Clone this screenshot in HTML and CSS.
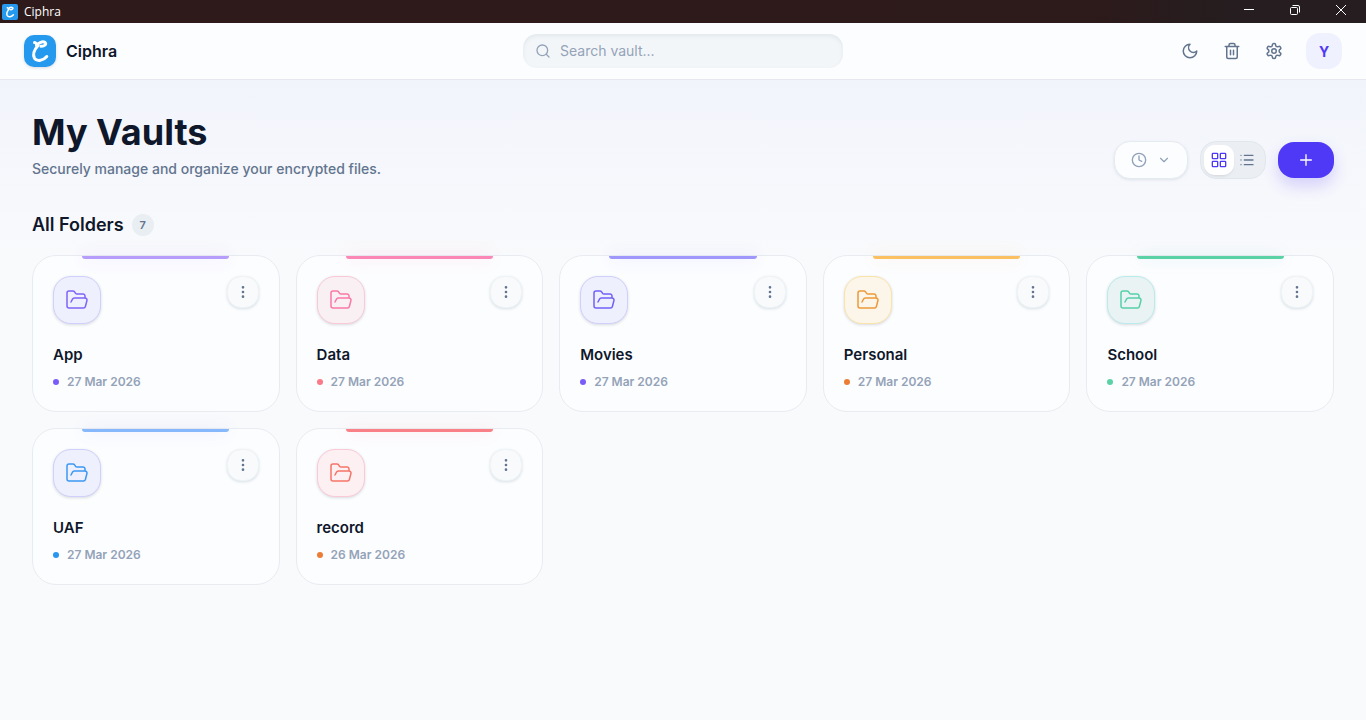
FILE: index.html
```
<!doctype html>
<html lang="en">
<head>
<title>Ciphra</title>
<meta charset="utf-8" />
<meta name="viewport" content="width=device-width, initial-scale=1" />
<link rel="stylesheet" href="styles.css">
</head>

<body>
<!-- icon sprite -->
<svg class="sprite" aria-hidden="true">
<symbol id="i-mark" viewBox="0 0 32 32">
<path d="M10.500 7.500C12 7.500 12.800 9 12.500 10.500M12.500 10.500C14.500 7.500 18.500 6 21 7.300C23 9 20.500 11.500 17 11.300M14 10.500C10.500 14.500 8.500 19.500 10.500 23.300C13 27 19.500 25.500 22.800 21.500"/>
</symbol>
<symbol id="i-search" viewBox="0 0 24 24"><circle cx="11" cy="11" r="8"/><path d="m21 21-4.300-4.300"/></symbol>
<symbol id="i-moon" viewBox="0 0 24 24"><path d="M12 3a6 6 0 0 0 9 9 9 9 0 1 1-9-9Z"/></symbol>
<symbol id="i-trash" viewBox="0 0 24 24"><path d="M3 6h18M19 6v14a2 2 0 0 1-2 2H7a2 2 0 0 1-2-2V6M8 6V4a2 2 0 0 1 2-2h4a2 2 0 0 1 2 2v2M10 11v6M14 11v6"/></symbol>
<symbol id="i-gear" viewBox="0 0 24 24"><path d="M12.220 2h-.440a2 2 0 0 0-2 2v.180a2 2 0 0 1-1 1.730l-.430.250a2 2 0 0 1-2 0l-.150-.080a2 2 0 0 0-2.730.730l-.220.380a2 2 0 0 0 .730 2.730l.150.100a2 2 0 0 1 1 1.720v.510a2 2 0 0 1-1 1.740l-.150.090a2 2 0 0 0-.730 2.730l.220.380a2 2 0 0 0 2.730.730l.150-.080a2 2 0 0 1 2 0l.430.250a2 2 0 0 1 1 1.730V20a2 2 0 0 0 2 2h.440a2 2 0 0 0 2-2v-.180a2 2 0 0 1 1-1.730l.430-.250a2 2 0 0 1 2 0l.150.080a2 2 0 0 0 2.730-.730l.220-.390a2 2 0 0 0-.730-2.730l-.150-.080a2 2 0 0 1-1-1.740v-.500a2 2 0 0 1 1-1.740l.150-.090a2 2 0 0 0 .730-2.730l-.220-.380a2 2 0 0 0-2.730-.730l-.150.080a2 2 0 0 1-2 0l-.430-.250a2 2 0 0 1-1-1.730V4a2 2 0 0 0-2-2z"/><circle cx="12" cy="12" r="3"/></symbol>
<symbol id="i-clock" viewBox="0 0 24 24"><circle cx="12" cy="12" r="10"/><path d="M12 6v6l4 2"/></symbol>
<symbol id="i-chevron" viewBox="0 0 24 24"><path d="m6 9 6 6 6-6"/></symbol>
<symbol id="i-grid" viewBox="0 0 24 24"><rect x="2" y="2" width="8" height="8" rx="1"/><rect x="14" y="2" width="8" height="8" rx="1"/><rect x="14" y="14" width="8" height="8" rx="1"/><rect x="2" y="14" width="8" height="8" rx="1"/></symbol>
<symbol id="i-list" viewBox="0 0 24 24"><path d="M3 5h.010M3 12h.010M3 19h.010M8 5h13M8 12h13M8 19h13"/></symbol>
<symbol id="i-plus" viewBox="0 0 24 24"><path d="M4 12h16M12 4v16"/></symbol>
<symbol id="i-more" viewBox="0 0 24 24"><circle cx="12" cy="12" r="1"/><circle cx="12" cy="5" r="1"/><circle cx="12" cy="19" r="1"/></symbol>
<symbol id="i-folder" viewBox="0 0 24 24"><path d="m6 14 1.500-2.900A2 2 0 0 1 9.240 10H20a2 2 0 0 1 1.940 2.500l-1.540 6a2 2 0 0 1-1.950 1.500H4a2 2 0 0 1-2-2V5a2 2 0 0 1 2-2h3.900a2 2 0 0 1 1.690.900l.810 1.200a2 2 0 0 0 1.670.900H18a2 2 0 0 1 2 2v2"/></symbol>
</svg>

<div class="titlebar">
<svg class="titlebar-logo mark"><use href="#i-mark"/></svg>
<span class="titlebar-name">Ciphra</span>
<div class="window-controls">
<button type="button" aria-label="Minimize"><svg viewBox="0 0 10 10"><path d="M0 4.500h10"/></svg></button>
<button type="button" aria-label="Restore"><svg viewBox="0 0 10 10"><rect x="0.500" y="2.500" width="7" height="7" rx="1"/><path d="M2.500 .5H8a1.500 1.500 0 0 1 1.500 1.500v5.500"/></svg></button>
<button type="button" aria-label="Close"><svg viewBox="0 0 10 10"><path d="M0 0l10 10M10 0L0 10"/></svg></button>
</div>
</div>

<header class="topbar">
<a class="brand" href="#">
<svg class="brand-logo mark"><use href="#i-mark"/></svg>
<span>Ciphra</span>
</a>
<label class="search">
<svg class="icon icon-sm"><use href="#i-search"/></svg>
<input type="text" placeholder="Search vault..." aria-label="Search vault" />
</label>
<div class="actions">
<div class="action-icons">
<button class="icon-btn" type="button" aria-label="Dark mode"><svg class="icon icon-md"><use href="#i-moon"/></svg></button>
<button class="icon-btn" type="button" aria-label="Trash"><svg class="icon icon-md"><use href="#i-trash"/></svg></button>
<button class="icon-btn" type="button" aria-label="Settings"><svg class="icon icon-md"><use href="#i-gear"/></svg></button>
</div>
<button class="avatar" type="button">Y</button>
</div>
</header>

<main>
<div class="page-head">
<div>
<h1>My Vaults</h1>
<p class="subtitle">Securely manage and organize your encrypted files.</p>
</div>
<div class="toolbar">
<button class="sort" type="button" aria-label="Sort by date">
<svg class="icon icon-sm"><use href="#i-clock"/></svg>
<svg class="icon icon-xs"><use href="#i-chevron"/></svg>
</button>
<div class="view-toggle">
<button class="active" type="button" aria-label="Grid view"><svg class="icon icon-sm"><use href="#i-grid"/></svg></button>
<button type="button" aria-label="List view"><svg class="icon icon-sm"><use href="#i-list"/></svg></button>
</div>
<button class="add" type="button" aria-label="New folder"><svg class="icon icon-sm"><use href="#i-plus"/></svg></button>
</div>
</div>

<div class="section-head">
<h2>All Folders</h2>
<span class="count">7</span>
</div>

<div class="folders">
<article class="card violet">
<div class="card-top">
<div class="tile"><svg class="icon icon-lg"><use href="#i-folder"/></svg></div>
<button class="more" type="button" aria-label="App options"><svg class="icon icon-sm"><use href="#i-more"/></svg></button>
</div>
<h3>App</h3>
<p class="date">27 Mar 2026</p>
</article>

<article class="card pink">
<div class="card-top">
<div class="tile"><svg class="icon icon-lg"><use href="#i-folder"/></svg></div>
<button class="more" type="button" aria-label="Data options"><svg class="icon icon-sm"><use href="#i-more"/></svg></button>
</div>
<h3>Data</h3>
<p class="date">27 Mar 2026</p>
</article>

<article class="card indigo">
<div class="card-top">
<div class="tile"><svg class="icon icon-lg"><use href="#i-folder"/></svg></div>
<button class="more" type="button" aria-label="Movies options"><svg class="icon icon-sm"><use href="#i-more"/></svg></button>
</div>
<h3>Movies</h3>
<p class="date">27 Mar 2026</p>
</article>

<article class="card amber">
<div class="card-top">
<div class="tile"><svg class="icon icon-lg"><use href="#i-folder"/></svg></div>
<button class="more" type="button" aria-label="Personal options"><svg class="icon icon-sm"><use href="#i-more"/></svg></button>
</div>
<h3>Personal</h3>
<p class="date">27 Mar 2026</p>
</article>

<article class="card green">
<div class="card-top">
<div class="tile"><svg class="icon icon-lg"><use href="#i-folder"/></svg></div>
<button class="more" type="button" aria-label="School options"><svg class="icon icon-sm"><use href="#i-more"/></svg></button>
</div>
<h3>School</h3>
<p class="date">27 Mar 2026</p>
</article>

<article class="card blue">
<div class="card-top">
<div class="tile"><svg class="icon icon-lg"><use href="#i-folder"/></svg></div>
<button class="more" type="button" aria-label="UAF options"><svg class="icon icon-sm"><use href="#i-more"/></svg></button>
</div>
<h3>UAF</h3>
<p class="date">27 Mar 2026</p>
</article>

<article class="card red">
<div class="card-top">
<div class="tile"><svg class="icon icon-lg"><use href="#i-folder"/></svg></div>
<button class="more" type="button" aria-label="record options"><svg class="icon icon-sm"><use href="#i-more"/></svg></button>
</div>
<h3>record</h3>
<p class="date">26 Mar 2026</p>
</article>
</div>
</main>
</body>
</html>
```

FILE: styles.css
```
* {
box-sizing: border-box;
}

body {
margin: 0;
min-height: 100vh;
display: flex;
flex-direction: column;
background-color: #f9fafc;
color: #0f172b;
font-family: Inter, "Liberation Sans", sans-serif;
}

h1, h2, h3, p {
margin: 0;
}

button {
display: flex;
align-items: center;
justify-content: center;
padding: 0;
border: 0;
background: none;
color: inherit;
font-family: inherit;
cursor: pointer;
}

.sprite {
display: none;
}

/* icons */
.icon {
flex: none;
fill: none;
stroke: currentColor;
stroke-width: 2;
stroke-linecap: round;
stroke-linejoin: round;
}
.icon-xs {width: 14px; height: 14px;}
.icon-sm {width: 16px; height: 16px;}
.icon-md {width: 18px; height: 18px;}
.icon-lg {width: 24px; height: 24px; stroke-width: 1.5;}

.mark {
flex: none;
background-color: #2499ee;
fill: none;
stroke: #fff;
stroke-width: 3;
stroke-linecap: round;
stroke-linejoin: round;
}

/* window title bar */
.titlebar {
display: flex;
align-items: center;
height: 23px;
padding: 0 2px;
background: linear-gradient(90deg, #2f1a1b, #2d1a1b 80%, #251d1f 90%);
color: #fff;
}
.titlebar-logo {
width: 16px;
height: 16px;
border-radius: 2px;
}
.titlebar-name {
margin-left: 6px;
font: 12px/16px "Open Sans", "Noto Sans", sans-serif;
}
.window-controls {
display: flex;
align-self: flex-start;
margin-left: auto;
}
.window-controls button {
width: 46px;
height: 20px;
}
.window-controls svg {
width: 10px;
height: 10px;
fill: none;
stroke: #fff;
}

/* header */
.topbar {
display: grid;
grid-template-columns: 1fr 320px 1fr;
align-items: center;
height: 57px;
padding: 0 24px;
background-color: #fcfdff;
border-bottom: 1px solid #e6eaf0;
}
.brand {
display: flex;
align-items: center;
gap: 10px;
color: #0f172b;
font-size: 16px;
font-weight: 600;
text-decoration: none;
}
.brand-logo {
width: 32px;
height: 32px;
border-radius: 10px;
box-shadow: 0 1px 3px rgba(15,23,43,0.15);
}
.search {
display: flex;
align-items: center;
gap: 9px;
height: 34px;
padding: 0 12px;
border-radius: 14px;
background-color: #f3f6f9;
box-shadow: inset 0 2px 4px rgba(15,60,80,0.08);
color: #94a3b8;
}
.search input {
flex: 1;
min-width: 0;
padding: 0;
border: 0;
outline: 0;
background: none;
color: #0f172b;
font: 14px/20px Inter, "Liberation Sans", sans-serif;
}
.search input::placeholder {
color: #94a3b8;
}
.actions {
display: flex;
align-items: center;
justify-content: flex-end;
gap: 15px;
}
.action-icons {
display: flex;
gap: 8px;
}
.icon-btn {
width: 34px;
height: 34px;
color: #62748e;
}
.avatar {
width: 36px;
height: 36px;
border-radius: 14px;
background-color: #eff1fe;
color: #4f39f6;
font-size: 14px;
font-weight: 700;
}

/* content */
main {
flex: 1;
padding: 32px;
background: linear-gradient(#f1f4fb, #f5f7fc 80px, #f9fafc 180px);
}
.page-head {
display: flex;
align-items: flex-end;
justify-content: space-between;
}
h1 {
font-size: 36px;
line-height: 40px;
font-weight: 700;
}
.subtitle {
margin-top: 7px;
color: #62748e;
font-size: 14px;
line-height: 20px;
font-weight: 500;
}
.toolbar {
display: flex;
align-items: center;
gap: 12px;
}
.sort {
gap: 10px;
height: 38px;
padding: 0 16px;
border: 1px solid #e5ecf1;
border-radius: 16px;
background-color: #fcfdff;
box-shadow: 0 1px 3px rgba(15,60,80,0.1);
color: #90a1b9;
}
.view-toggle {
display: flex;
padding: 4px;
border: 1px solid #e1e8ed;
border-radius: 16px;
background-color: #ebeff4;
}
.view-toggle button {
width: 28px;
height: 28px;
border-radius: 10px;
color: #62748e;
}
.view-toggle .active {
background-color: #fff;
box-shadow: 0 0 0 1px #fff, 0 2px 3px rgba(15,23,43,0.12);
color: #4f39f6;
}
.add {
width: 56px;
height: 36px;
border-radius: 16px;
background-color: #4f39f6;
box-shadow: 0 8px 16px rgba(79,57,246,0.2);
color: #fff;
}

.section-head {
display: flex;
align-items: center;
gap: 8px;
margin: 32px 0 16px;
}
h2 {
font-size: 18px;
line-height: 28px;
font-weight: 600;
}
.count {
min-width: 22px;
border-radius: 11px;
background-color: #e9eef3;
color: #62748e;
font-size: 11px;
line-height: 22px;
font-weight: 600;
text-align: center;
}

/* folder cards */
.folders {
display: grid;
grid-template-columns: repeat(auto-fill, minmax(240px, 1fr));
gap: 16px;
}
.card {
position: relative;
padding: 20px;
border: 1px solid #e8ecf1;
border-radius: 24px;
background-color: #fcfdff;
}
.card::before {
content: "";
position: absolute;
top: 0;
left: 20%;
right: 20%;
height: 3px;
border-radius: 0 0 3px 3px;
background-color: var(--bar);
box-shadow: 0 0 16px var(--glow);
}
.card-top {
display: flex;
align-items: flex-start;
justify-content: space-between;
margin-bottom: 20px;
}
.tile {
display: flex;
align-items: center;
justify-content: center;
width: 48px;
height: 48px;
border: 1px solid var(--edge);
border-radius: 18px;
background-color: var(--tint);
box-shadow: 0 1px 3px rgba(15,23,43,0.15);
color: var(--ink);
}
.more {
width: 32px;
height: 32px;
border: 1px solid #eef3f6;
border-radius: 14px;
background-color: #f8fafc;
box-shadow: 0 1px 3px rgba(15,60,80,0.15);
color: #62748e;
}
h3 {
font-size: 15px;
line-height: 22px;
font-weight: 600;
}
.date {
display: flex;
align-items: center;
gap: 8px;
margin-top: 7px;
color: #94a3b8;
font-size: 12px;
line-height: 18px;
font-weight: 600;
}
.date::before {
content: "";
width: 6px;
height: 6px;
border-radius: 50%;
background-color: var(--dot);
}

.violet {--bar: #b79dfb; --glow: rgba(124,92,246,0.2); --edge: #cfd0fb; --tint: #eff0fd; --ink: #7f63f8; --dot: #7a5cf8;}
.pink {--bar: #fb87b7; --glow: rgba(246,70,120,0.2); --edge: #fbc9d6; --tint: #f9f0f4; --ink: #fa78a6; --dot: #fa7a88;}
.indigo {--bar: #9f97fb; --glow: rgba(99,92,246,0.2); --edge: #cfd0fb; --tint: #eff0fd; --ink: #7161f6; --dot: #7a5cf8;}
.amber {--bar: #fac062; --glow: rgba(246,150,60,0.2); --edge: #fae3a8; --tint: #fbf5ea; --ink: #ed9a3a; --dot: #ec7c36;}
.green {--bar: #5bd2a6; --glow: rgba(30,150,130,0.2); --edge: #b8ecec; --tint: #e9f3f4; --ink: #57d0a6; --dot: #5bd2a6;}
.blue {--bar: #87b8fb; --glow: rgba(80,100,246,0.2); --edge: #cfd0fb; --tint: #eff0fd; --ink: #3c98f2; --dot: #2696f0;}
.red {--bar: #f88086; --glow: rgba(246,70,80,0.2); --edge: #fbc9d6; --tint: #fdf0f2; --ink: #f57468; --dot: #ec7c36;}
```
